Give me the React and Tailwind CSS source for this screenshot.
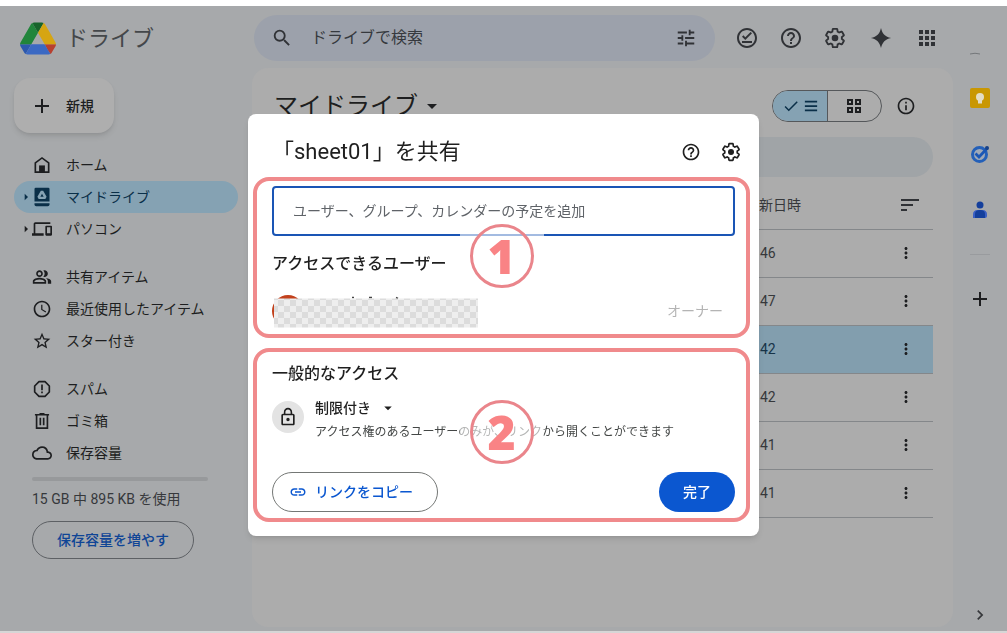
import React from 'react';
import {
  MdAccessTime,
  MdAdd,
  MdApps,
  MdArrowDropDown,
  MdArrowRight,
  MdCheck,
  MdChevronRight,
  MdCloudQueue,
  MdHelpOutline,
  MdInfoOutline,
  MdLink,
  MdLockOutline,
  MdMoreVert,
  MdOutlineDevices,
  MdOutlineOfflinePin,
  MdOutlinePeopleAlt,
  MdSearch,
  MdStarBorder,
  MdTune,
} from 'react-icons/md';

function DriveLogo() {
  return (
    <svg viewBox="0 0 87.3 78" className="w-9 h-[33px] shrink-0" aria-hidden="true">
      <path fill="#2c58ad" d="m6.6 66.85 3.85 6.65c.8 1.4 1.95 2.5 3.3 3.3l13.75-23.8h-27.5c0 1.55.4 3.1 1.2 4.5z" />
      <path fill="#21853b" d="m43.65 25-13.75-23.8c-1.35.8-2.5 1.9-3.3 3.3l-25.4 44a9.06 9.06 0 0 0 -1.2 4.5h27.5z" />
      <path fill="#b8402f" d="m73.55 76.8c1.35-.8 2.5-1.9 3.3-3.3l1.6-2.75 7.65-13.25c.8-1.4 1.2-2.95 1.2-4.5h-27.502l5.852 11.5z" />
      <path fill="#17642b" d="m43.65 25 13.75-23.8c-1.35-.8-2.9-1.2-4.5-1.2h-18.5c-1.6 0-3.15.45-4.5 1.2z" />
      <path fill="#3b69c3" d="m59.8 53h-32.3l-13.75 23.8c1.35.8 2.9 1.2 4.5 1.2h50.8c1.6 0 3.15-.45 4.5-1.2z" />
      <path fill="#d6a512" d="m73.4 26.5-12.7-22c-.8-1.4-1.95-2.5-3.3-3.3l-13.75 23.8 16.15 28h27.45c0-1.55-.4-3.1-1.2-4.5z" />
    </svg>
  );
}

function GearIcon({ className }) {
  return (
    <svg viewBox="0 0 24 24" className={className} fill="none" stroke="currentColor" strokeWidth="2" aria-hidden="true">
      <path d="M19.43 12.98c.04-.32.07-.64.07-.98s-.03-.66-.07-.98l2.11-1.65c.19-.15.24-.42.12-.64l-2-3.46c-.12-.22-.39-.3-.61-.22l-2.49 1c-.52-.4-1.08-.73-1.69-.98l-.38-2.65C14.46 2.18 14.25 2 14 2h-4c-.25 0-.46.18-.49.42l-.38 2.65c-.61.25-1.17.59-1.69.98l-2.49-1c-.23-.09-.49 0-.61.22l-2 3.46c-.13.22-.07.49.12.64l2.11 1.65c-.04.32-.07.65-.07.98s.03.66.07.98l-2.11 1.65c-.19.15-.24.42-.12.64l2 3.46c.12.22.39.3.61.22l2.49-1c.52.4 1.08.73 1.69.98l.38 2.65c.03.24.24.42.49.42h4c.25 0 .46-.18.49-.42l.38-2.65c.61-.25 1.17-.59 1.69-.98l2.49 1c.23.09.49 0 .61-.22l2-3.46c.12-.22.07-.49-.12-.64l-2.11-1.65z" />
      <circle cx="12" cy="12" r="3.6" fill="currentColor" stroke="none" />
    </svg>
  );
}

function SparkIcon({ className }) {
  return (
    <svg viewBox="0 0 24 24" className={className} fill="currentColor" aria-hidden="true">
      <path d="M12 1c1.500 6.500 4.500 9.500 11 11-6.500 1.500-9.500 4.500-11 11-1.500-6.500-4.500-9.500-11-11 6.500-1.500 9.500-4.500 11-11z" />
    </svg>
  );
}

function HomeIcon({ className }) {
  return (
    <svg viewBox="0 0 24 24" className={className} fill="none" stroke="currentColor" strokeWidth="2" aria-hidden="true">
      <path d="M4 20.500V9.500l8-6 8 6v11z" />
      <path d="M8.500 12.500h7v8h-7z" fill="currentColor" stroke="none" />
    </svg>
  );
}

function MyDriveIcon({ className }) {
  return (
    <svg viewBox="0 0 24 24" className={className} fill="currentColor" aria-hidden="true">
      <path
        fillRule="evenodd"
        d="M4.500 1h15A1.500 1.500 0 0 1 21 2.500V17.500H3V2.500A1.500 1.500 0 0 1 4.500 1zM10.600 4.500 6.500 11.700 8 14.300h8l1.500-2.600-4.100-7.200zM12 8l2 3.700h-4z"
      />
      <path d="M3 19.500h18v1.500a2 2 0 0 1-2 2H5a2 2 0 0 1-2-2z" />
    </svg>
  );
}

function SpamIcon({ className }) {
  return (
    <svg viewBox="0 0 24 24" className={className} fill="none" stroke="currentColor" strokeWidth="2" aria-hidden="true">
      <path strokeLinejoin="round" d="M8.400 3.200h7.200l5.200 5.200v7.200l-5.200 5.200H8.400l-5.200-5.200V8.400z" />
      <path d="M12 6.500v7M12 15v2.200" />
    </svg>
  );
}

function TrashIcon({ className }) {
  return (
    <svg viewBox="0 0 24 24" className={className} fill="none" stroke="currentColor" strokeWidth="2" aria-hidden="true">
      <path d="M3.500 4.500h17M9 3.500h6M5.500 4.500v16h13v-16M10 8v9M14 8v9" />
    </svg>
  );
}

function ListIcon({ className }) {
  return (
    <svg viewBox="0 0 16 16" className={className} fill="none" stroke="currentColor" strokeWidth="2" aria-hidden="true">
      <path d="M1 3h14M1 8h14M1 13h14" />
    </svg>
  );
}

function GridIcon({ className }) {
  return (
    <svg viewBox="0 0 16 16" className={className} fill="none" stroke="currentColor" strokeWidth="2" aria-hidden="true">
      <path d="M2 2h4v4H2zM10 2h4v4h-4zM2 10h4v4H2zM10 10h4v4h-4z" />
    </svg>
  );
}

function SortIcon({ className }) {
  return (
    <svg viewBox="0 0 18 12" className={className} fill="none" stroke="currentColor" strokeWidth="2" aria-hidden="true">
      <path d="M0 1h18M0 6h12M0 11h6" />
    </svg>
  );
}

const navGroups = [
  [
    { label: 'ホーム', icon: HomeIcon },
    { label: 'マイドライブ', icon: MyDriveIcon, active: true, expandable: true },
    { label: 'パソコン', icon: MdOutlineDevices, expandable: true },
  ],
  [
    { label: '共有アイテム', icon: MdOutlinePeopleAlt },
    { label: '最近使用したアイテム', icon: MdAccessTime },
    { label: 'スター付き', icon: MdStarBorder },
  ],
  [
    { label: 'スパム', icon: SpamIcon },
    { label: 'ゴミ箱', icon: TrashIcon },
    { label: '保存容量', icon: MdCloudQueue },
  ],
];

const files = [
  { id: 1, modified: '46' },
  { id: 2, modified: '47' },
  { id: 3, modified: '42', selected: true },
  { id: 4, modified: '42' },
  { id: 5, modified: '41' },
  { id: 6, modified: '41' },
];

function Header() {
  return (
    <header className="flex items-center h-[62px] pt-0.5 text-[#303236]">
      <a href="#drive" className="w-[254px] shrink-0 flex items-center gap-2.5 pl-5 text-[22px] text-[#44474a]">
        <DriveLogo />
        ドライブ
      </a>
      <form className="flex-1 h-[46px] flex items-center rounded-full bg-[#9ca1ab] pl-[17px] pr-[18px]">
        <button type="button" aria-label="検索">
          <MdSearch className="size-[22px]" />
        </button>
        <input
          type="search"
          aria-label="ドライブで検索"
          placeholder="ドライブで検索"
          className="flex-1 min-w-0 ml-[18px] bg-transparent text-base placeholder:text-[#36393e] outline-none"
        />
        <button type="button" aria-label="検索オプション">
          <MdTune className="size-[22px]" />
        </button>
      </form>
      <div className="w-[292px] shrink-0 flex items-center pl-2.5">
        <button aria-label="オフライン" className="w-11 flex justify-center"><MdOutlineOfflinePin className="size-6" /></button>
        <button aria-label="ヘルプ" className="w-11 flex justify-center"><MdHelpOutline className="size-6" /></button>
        <button aria-label="設定" className="w-11 flex justify-center"><GearIcon className="size-[22px]" /></button>
        <button aria-label="Gemini" className="w-12 flex justify-center"><SparkIcon className="size-[22px]" /></button>
        <button aria-label="アプリ" className="w-11 flex justify-center"><MdApps className="size-6" /></button>
        <svg viewBox="0 0 12 34" className="w-3 h-[34px] ml-5" aria-hidden="true">
          <path d="M1 33q5-1.500 10 0" stroke="#74777a" fill="none" />
        </svg>
      </div>
    </header>
  );
}

function NavItem({ item }) {
  const Icon = item.icon;
  return (
    <a
      href="#nav"
      className={
        item.active
          ? 'h-8 flex items-center rounded-full bg-[#85a2b3] text-[#0a2f48]'
          : 'h-8 flex items-center rounded-full text-[#1d1e20]'
      }
    >
      <span className="w-[18px] pl-1 flex">
        {item.expandable && <MdArrowRight className="size-4 shrink-0" />}
      </span>
      <Icon className="size-5 shrink-0" />
      <span className="ml-3.5 text-sm">{item.label}</span>
    </a>
  );
}

function Sidebar() {
  return (
    <aside className="w-[252px] shrink-0 pl-3.5 pr-3.5 pt-2.5">
      <button className="h-[55px] w-[100px] flex items-center gap-3 pl-4 rounded-2xl bg-[#aeaeae] shadow-md text-sm font-medium text-[#1d1e20]">
        <MdAdd className="size-6" />
        新規
      </button>
      <nav className="mt-4 flex flex-col gap-4">
        {navGroups.map((group, i) => (
          <div key={i}>
            {group.map((item) => (
              <NavItem key={item.label} item={item} />
            ))}
          </div>
        ))}
      </nav>
      <div className="pl-[18px]">
        <div className="mt-2 mr-[30px] h-1 rounded-full bg-[#97999b]" />
        <p className="mt-[7px] text-sm leading-[22px] text-[#36383b]">15 GB 中 895 KB を使用</p>
        <button className="mt-[11px] h-[38px] w-[162px] rounded-full border border-[#5d6064] text-sm font-medium text-[#0f4596]">
          保存容量を増やす
        </button>
      </div>
    </aside>
  );
}

function FileTable() {
  return (
    <table className="mt-1 w-full table-fixed text-sm text-[#36383b]">
      <thead>
        <tr className="h-12 border-b border-[#84878a]">
          <td />
          <th className="w-[120px] text-left font-normal">新日時</th>
          <th className="w-[54px] pl-[22px]">
            <button aria-label="並べ替え" className="block text-[#303236]">
              <SortIcon className="w-[18px] h-3" />
            </button>
          </th>
        </tr>
      </thead>
      <tbody>
        {files.map((file) => (
          <tr
            key={file.id}
            className={file.selected ? 'h-12 border-b border-[#84878a] bg-[#829eae] text-[#173448]' : 'h-12 border-b border-[#84878a]'}
          >
            <td />
            <td className="pl-px">{file.modified}</td>
            <td>
              <button aria-label="その他の操作" className="block mx-auto text-[#1d1e20]">
                <MdMoreVert className="size-[18px]" />
              </button>
            </td>
          </tr>
        ))}
      </tbody>
    </table>
  );
}

function MainPanel() {
  return (
    <main className="flex-1 min-w-0 mb-1 rounded-2xl bg-[#acacac] pl-[22px] pr-5 pt-[22px] text-[#1d1e20]">
      <div className="h-8 mb-[15px] flex items-center">
        <h1 className="text-2xl">マイドライブ</h1>
        <MdArrowDropDown className="size-6 ml-0.5" />
        <div className="ml-auto h-8 w-[110px] flex rounded-full border border-[#55585b] overflow-hidden">
          <button aria-label="リスト表示" className="flex-1 flex items-center justify-center gap-1 bg-[#85a2b3] border-r border-[#55585b] text-[#0a2f48]">
            <MdCheck className="size-[18px]" />
            <ListIcon className="size-3.5" />
          </button>
          <button aria-label="グリッド表示" className="flex-1 flex items-center justify-center">
            <GridIcon className="size-4" />
          </button>
        </div>
        <button aria-label="詳細" className="ml-3.5 mr-[17px]">
          <MdInfoOutline className="size-5" />
        </button>
      </div>
      <div className="h-10 rounded-full bg-[#a0a4a7]" />
      <FileTable />
    </main>
  );
}

function SideRail() {
  return (
    <aside className="w-[54px] shrink-0 flex flex-col items-center pt-5 pb-1.5 text-[#1d1e20]">
      <a href="#keep" aria-label="Keep">
        <svg viewBox="0 0 20 20" className="size-5">
          <rect width="20" height="20" rx="2" fill="#c99703" />
          <circle cx="10" cy="9" r="4" fill="#e3dcc6" />
          <path d="M8 12h4v3.500H8z" fill="#e3dcc6" />
        </svg>
      </a>
      <a href="#tasks" aria-label="ToDo リスト" className="mt-9">
        <svg viewBox="0 0 20 20" className="size-5">
          <circle cx="9.500" cy="10.500" r="7" fill="#9fa9b8" stroke="#2460b8" strokeWidth="3" />
          <path d="M5.500 9.500l3.500 3.500 8.500-9" fill="none" stroke="#1b57b5" strokeWidth="2.800" />
          <circle cx="17" cy="4" r="2" fill="#16418a" />
        </svg>
      </a>
      <a href="#contacts" aria-label="連絡先" className="mt-9">
        <svg viewBox="0 0 20 20" className="size-5">
          <circle cx="10" cy="5" r="3.500" fill="#143f9c" />
          <path d="M3 18v-3.500Q3 10 7.500 10h5q4.500 0 4.500 4.500V16q0 2-2 2z" fill="#3a5fc4" />
          <path d="M5 18v-4q0-4 5-4t5 4v4z" fill="#143f9c" />
        </svg>
      </a>
      <hr className="mt-[34px] w-5 border-[#999b9e]" />
      <button aria-label="アドオンを取得" className="mt-8">
        <MdAdd className="size-6" />
      </button>
      <button aria-label="サイドパネルを非表示" className="mt-auto">
        <MdChevronRight className="size-5 text-[#36383b]" />
      </button>
    </aside>
  );
}

function StepBadge({ number, className }) {
  return (
    <div className={className}>
      <div className="size-16 mx-auto flex items-center justify-center rounded-full border-3 border-[#ea858b] text-[48px] leading-none font-extrabold font-['Open_Sans',sans-serif] text-[#f98385]">
        {number}
      </div>
    </div>
  );
}

// Owner row: avatar and name hidden under a mosaic
function HiddenOwner() {
  return (
    <svg viewBox="0 0 206 34" className="w-[206px] h-[34px]" aria-hidden="true">
      <defs>
        <pattern id="mosaic" width="12" height="12" patternUnits="userSpaceOnUse">
          <rect width="12" height="12" fill="#eeeeee" />
          <rect width="6" height="6" fill="#dcdcdc" />
          <rect x="6" y="6" width="6" height="6" fill="#dcdcdc" />
        </pattern>
      </defs>
      <circle cx="16" cy="17" r="16" fill="#c2411c" />
      <path d="M80 3.500h2M97 3.500h3M124 3.500l2 1" stroke="#444" strokeWidth="1.500" />
      <rect x="2" y="4.500" width="204" height="29" fill="url(#mosaic)" />
    </svg>
  );
}

function ShareDialog() {
  return (
    <div
      role="dialog"
      aria-label="「sheet01」を共有"
      className="w-[511px] max-w-full rounded-lg bg-white pl-[5px] pr-[9px] pb-3.5 shadow-md text-[#1f1f1f]"
    >
      <div className="h-[63px] flex items-center pl-[19px] pr-[9px] pt-3">
        <h2 className="text-[22px]">「sheet01」を共有</h2>
        <button aria-label="ヘルプ" className="ml-auto"><MdHelpOutline className="size-5" /></button>
        <button aria-label="設定" className="ml-5"><GearIcon className="size-5" /></button>
      </div>

      <section className="relative h-[161px] rounded-2xl border-4 border-[#f08a8c] px-[15px] pr-[11px] pt-[5px]">
        <input
          type="text"
          aria-label="ユーザー、グループ、カレンダーの予定を追加"
          placeholder="ユーザー、グループ、カレンダーの予定を追加"
          className="block w-full h-[50px] rounded border-2 border-[#1a55b5] px-[19px] text-sm placeholder:text-[#5f6368] outline-none"
        />
        <h3 className="mt-4 text-base font-medium">アクセスできるユーザー</h3>
        <div className="mt-[18px] flex items-center justify-between">
          <HiddenOwner />
          <span className="pr-3 text-sm text-[#b4b4b4]">オーナー</span>
        </div>
        <StepBadge number="1" className="absolute top-[43px] left-1/2 -translate-x-1/2 w-[84px] bg-white/60" />
      </section>

      <section className="relative mt-2.5 rounded-2xl border-4 border-[#f08a8c] pl-[15px] pr-[11px] pt-2.5 pb-1.5">
        <h3 className="text-base font-medium">一般的なアクセス</h3>
        <div className="mt-2.5 flex items-start gap-[11px]">
          <span className="size-8 mt-[5px] shrink-0 flex items-center justify-center rounded-full bg-[#e3e3e3]">
            <MdLockOutline className="size-5" />
          </span>
          <div>
            <button className="flex items-center gap-2 text-sm leading-6 font-medium">
              制限付き
              <MdArrowDropDown className="size-[18px]" />
            </button>
            <p className="text-xs leading-6 text-[#444746]">
              アクセス権のあるユーザーのみが、リンクから開くことができます
            </p>
          </div>
        </div>
        <div className="mt-7 flex items-center justify-between">
          <button className="h-10 flex items-center gap-2 rounded-full border border-[#747775] pl-4 pr-6 text-sm font-medium text-[#0b57d0]">
            <MdLink className="size-[18px]" />
            リンクをコピー
          </button>
          <button className="h-10 px-6 rounded-full bg-[#0b57d0] text-sm font-medium text-white">完了</button>
        </div>
        <StepBadge number="2" className="absolute top-12 left-1/2 -translate-x-1/2 w-[84px] bg-white/60" />
      </section>
    </div>
  );
}

export default function App() {
  return (
    <div className="min-h-screen flex flex-col pt-1.5 bg-white font-[Roboto,'Noto_Sans_CJK_JP',sans-serif]">
      <div className="flex-1 flex flex-col bg-[#a7a9ab] border-b-2 border-[#d6d6d6]">
        <Header />
        <div className="flex-1 flex">
          <Sidebar />
          <MainPanel />
          <SideRail />
        </div>
      </div>
      <div className="fixed inset-0 flex items-start justify-center pt-[114px]">
        <ShareDialog />
      </div>
    </div>
  );
}
